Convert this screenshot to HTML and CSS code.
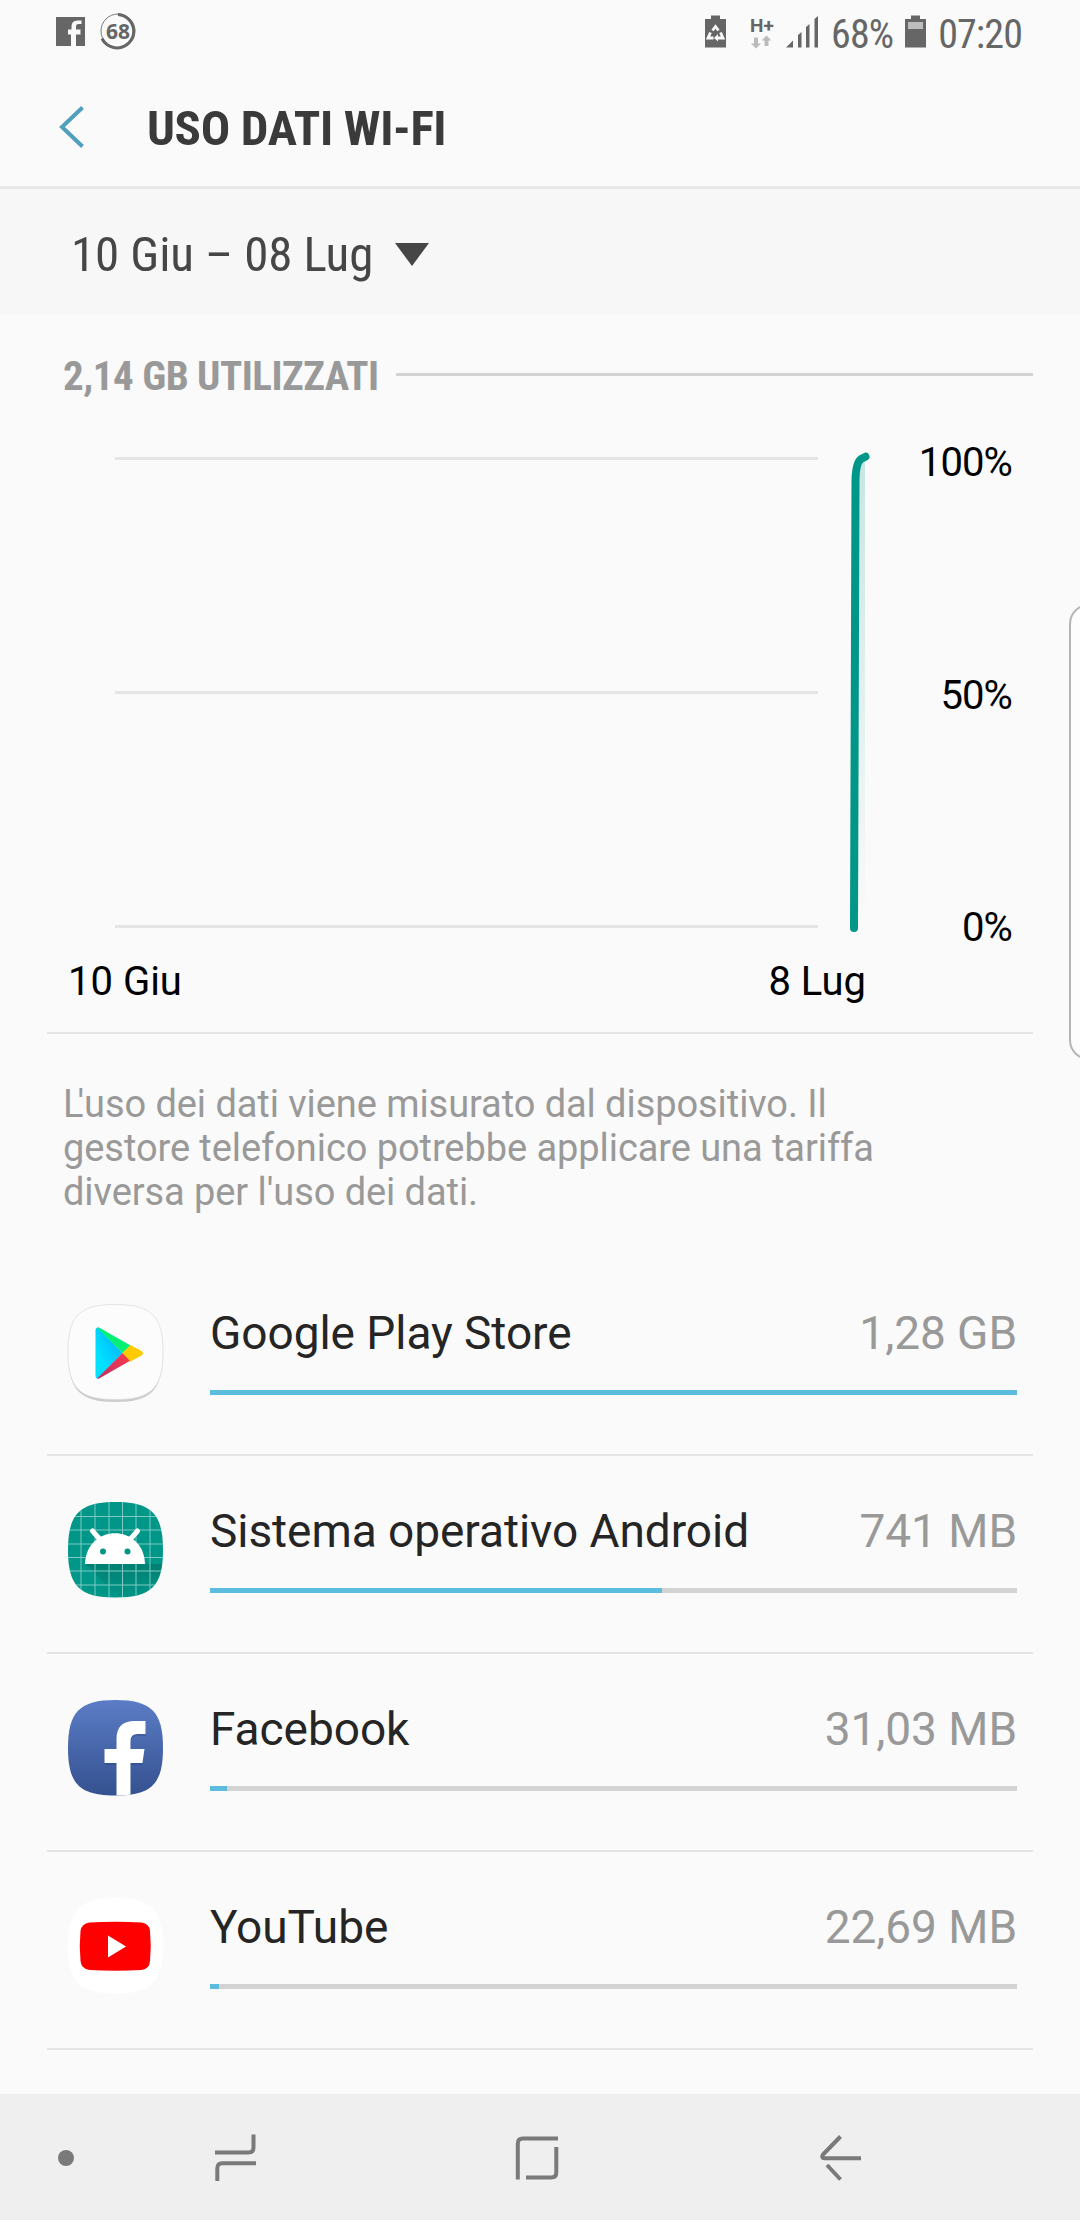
FILE: index.html
```html
<!DOCTYPE html>
<html lang="it">
<head>
<meta charset="utf-8">
<title>Uso dati Wi-Fi</title>
<link rel="stylesheet" href="styles.css">
</head>
<body>
<div class="screen">
  <div class="status">
    <svg class="status-left" width="84" height="40" viewBox="54 12 84 40">
      <path fill="#666" d="M56 17h29v29h-9V34.500h4.500V29.500H76V26.500q0-2.500 2.500-2.500h3V20.500h-4q-6 0-6 6v3h-3.500v5H71V46H56z"/>
      <circle cx="118" cy="31" r="17" fill="none" stroke="#777" stroke-width="1"/>
      <path fill="none" stroke="#666" stroke-width="3" d="M118 14.500A16.700 16.700 0 1 1 102 38.500"/>
      <text class="badge-num" x="118" y="39" text-anchor="middle">68</text>
    </svg>
    <div class="status-right">
      <svg width="118" height="40" viewBox="704 12 118 40">
        <path fill="#666" d="M706 19h6v-3.500h9V19h6v28.500h-21z"/>
        <path fill="none" stroke="#fafafa" stroke-width="2.800" d="M713.500 30.500l3-4 3 4M711.500 32.500l-2.500 5.500h5.500M721.500 32.500l2.500 5.500h-6"/>
        <path fill="#fafafa" d="M719 34v7.500l-4-3.500z"/>
        <text class="net" x="751" y="31.500">H+</text>
        <path fill="#bbb" d="M755 37.500h4v6h3l-5 5-5-5h3zM765.500 46v-5.500h-3l5-5 5 5h-3V46z"/>
        <path fill="#666" d="M787 47.500l7-7v7zM799 47.500V35l3.500-3v15.500zM807 47.500V27l3.500-3v23.500zM815.500 47.500V19l3.500-3v31.500z"/>
      </svg>
      <span class="status-text pct">68%</span>
      <svg class="battery" width="21" height="33" viewBox="0 0 21 33">
        <path fill="#666" d="M0 4h6V.5h9V4h6v28.500H0z"/><path fill="#bdbdbd" d="M3 7h15v7H3z"/>
      </svg>
      <span class="status-text clock">07:20</span>
    </div>
  </div>
  <header class="header">
    <svg width="28" height="44" viewBox="0 0 28 44"><path fill="none" stroke="#4f9fbd" stroke-width="4" d="M25.500 2.500L5 22l20.500 19.500"/></svg>
    <h1 class="title">USO DATI WI-FI</h1>
  </header>
  <div class="period">
    <span class="period-text">10 Giu – 08 Lug</span>
    <svg width="34" height="23" viewBox="0 0 34 23"><path fill="#464646" d="M0 0h34L17 23z"/></svg>
  </div>
  <div class="section"><h2 class="section-title">2,14 GB UTILIZZATI</h2><div class="section-line"></div></div>
  <div class="chart">
    <div class="plot">
      <svg width="820" height="500" viewBox="60 440 820 500">
        <defs><linearGradient id="fade" x1="0" y1="0" x2="0" y2="1"><stop offset="0" stop-color="#009688" stop-opacity=".2"/><stop offset="1" stop-color="#009688" stop-opacity="0"/></linearGradient></defs>
        <path fill="#e5e5e5" d="M115 457h703v3H115zM115 691h703v3H115zM115 925h703v3H115z"/>
        <path fill="url(#fade)" d="M854 928V462h11v466z"/>
        <path fill="none" stroke="#009688" stroke-width="8" stroke-linecap="round" stroke-linejoin="round" d="M854 928L855.500 480Q856 461 862 458.500L865.500 456.700"/>
      </svg>
      <div class="dates"><span>10 Giu</span><span>8 Lug</span></div>
    </div>
    <div class="scale"><span>100%</span><span>50%</span><span>0%</span></div>
  </div>
  <p class="note"><span class="kern">L</span>'uso dei dati viene misurato dal dispositivo. Il<br>gestore telefonico potrebbe applicare una tariffa<br>diversa per l'uso dei dati.</p>
  <ul class="apps">
    <li class="app">
      <svg class="icon" viewBox="0 0 96 98">
        <defs><linearGradient id="pb" x1="1" y1="0" x2="0" y2="1"><stop offset="0" stop-color="#00a8ff"/><stop offset=".7" stop-color="#00e0ff"/></linearGradient>
        <linearGradient id="pr" x1="1" y1="0" x2="0" y2="1"><stop offset="0" stop-color="#ff3a44"/><stop offset="1" stop-color="#b8316a"/></linearGradient></defs>
        <path fill="#bbb" d="M48 3C84 3 95 14 95 50S84 98 48 98 1 86 1 50 12 3 48 3z" opacity=".75"/>
        <path fill="#fcfcfc" stroke="#ddd" stroke-width=".8" d="M48 .5C84 .5 95.500 12 95.500 48S84 95.500 48 95.500.5 84 .5 48 12 .5 48 .5z"/>
        <path fill="url(#pb)" d="M28 26Q28 24 30 23.500L55 49 30 74.500Q28 74 28 72z"/>
        <path fill="#00f076" d="M29.500 23.500q1.500-.5 3 .5L63 41.500 55 49z"/>
        <path fill="url(#pr)" d="M29.500 74.500q1.500 .5 3-.5L63 56.500 55 49z"/>
        <path fill="#ffcb00" d="M63 41l11 6q3 2 0 4.500L63 57.500 55 49z"/>
      </svg>
      <div class="body"><div class="line"><span class="name">Google Play Store</span><span class="value">1,28 GB</span></div><div class="bar"><div class="fill" style="width:100%"></div></div></div>
    </li>
    <li class="app">
      <svg class="icon" viewBox="0 0 96 98">
        <defs><clipPath id="sq"><path d="M48 0C84 0 95.500 12 95.500 48S84 95.500 48 95.500.5 84 .5 48 12 0 48 0z"/></clipPath>
        <linearGradient id="sh" x1="0" y1="0" x2="0" y2="1"><stop offset="0" stop-color="#004d40" stop-opacity=".3"/><stop offset="1" stop-color="#004d40" stop-opacity="0"/></linearGradient></defs>
        <g clip-path="url(#sq)"><path fill="#009688" d="M0 0h96v96H0z"/>
        <path fill="url(#sh)" d="M18 62l34 34h44V62z"/>
        <path stroke="#7fcac3" stroke-width="1" fill="none" d="M13.500 0v96M27.500 0v96M41.500 0v96M55 0v96M68.500 0v96M82.500 0v96M0 14.500h96M0 28h96M0 42h96M0 55.500h96M0 69h96M0 83h96"/></g>
        <path fill="#fff" d="M17.500 62C19 21 76 21 77.500 62z"/><path stroke="#fff" stroke-width="5" stroke-linecap="round" d="M25 29l8 9M70 29l-8 9"/>
        <circle cx="35.500" cy="49.500" r="3" fill="#009688"/><circle cx="60" cy="49.500" r="3" fill="#009688"/>
      </svg>
      <div class="body"><div class="line"><span class="name">Sistema operativo Android</span><span class="value">741 MB</span></div><div class="bar"><div class="fill" style="width:56%"></div></div></div>
    </li>
    <li class="app">
      <svg class="icon" viewBox="0 0 96 98">
        <defs><linearGradient id="fb" x1="0" y1="0" x2="0" y2="1"><stop offset="0" stop-color="#5b7cc6"/><stop offset="1" stop-color="#34518f"/></linearGradient></defs>
        <g clip-path="url(#sq)"><path fill="url(#fb)" d="M0 0h96v96H0z"/>
        <path fill="#1d3570" opacity=".25" transform="translate(0 2)" d="M49 96V63H37V49h12V39q0-18 18-18h11v13h-8q-7 0-7 7v8h14l-2 14H63v33z"/>
        <path fill="#fff" d="M49 96V63H37V49h12V39q0-18 18-18h11v13h-8q-7 0-7 7v8h14l-2 14H63v33z"/></g>
      </svg>
      <div class="body"><div class="line"><span class="name">Facebook</span><span class="value">31,03 MB</span></div><div class="bar"><div class="fill" style="width:17px"></div></div></div>
    </li>
    <li class="app">
      <svg class="icon" viewBox="0 0 96 98">
        <path fill="#fff" d="M48 0C84 0 95.500 12 95.500 48S84 95.500 48 95.500.5 84 .5 48 12 0 48 0z"/>
        <path fill="red" d="M22 24.500Q48 23 74 24.500 82 25.500 82.500 33 84 48 82.500 63 82 71 74 72 48 73.500 22 72 14 71 13 63 11.500 48 13 33 14 25.500 22 24.500z"/><path fill="#fff" d="M40.500 37.500v22l18-11z"/>
      </svg>
      <div class="body"><div class="line"><span class="name">YouTube</span><span class="value">22,69 MB</span></div><div class="bar"><div class="fill" style="width:9px"></div></div></div>
    </li>
  </ul>
  <nav class="nav">
    <svg width="1080" height="126" viewBox="0 2094 1080 126" fill="none" stroke="#7a7a7a" stroke-width="4">
      <circle cx="66" cy="2158" r="8" fill="#7a7a7a" stroke="none"/>
      <path d="M253.500 2134.500v13q0 5-5 5H215M217.300 2181v-12.500q0-5.300 5-5.300H256M517.800 2179.500v-36q0-5 5-5H558M556.300 2147v25.500q0 5-5 5H526M840.500 2136.500l-17.500 18q-2 3.500 1.500 3.800h36.500M827 2165l13.500 14.500"/>
    </svg>
  </nav>
  <div class="edge-handle"></div>
</div>
</body>
</html>
```
FILE: styles.css
```css
* { box-sizing: border-box; }
body { margin: 0; background: #fafafa; font-family: Roboto, "Liberation Sans", sans-serif; }
.screen { position: relative; width: 1080px; height: 2220px; overflow: hidden; display: flex; flex-direction: column; background: #fafafa; }
.status { height: 72px; padding: 12px 58px 0 54px; display: flex; justify-content: space-between; align-items: flex-start; color: #666; }
.status svg { display: block; flex: none; }
.status-right { display: flex; align-items: flex-start; }
.badge-num { font: 700 21px "Open Sans", sans-serif; fill: #666; }
.net { font: 700 19px Roboto, sans-serif; fill: #666; }
.status-text { font-family: "Roboto Condensed", Roboto, sans-serif; font-stretch: 75%; font-size: 40px; line-height: 46px; letter-spacing: -0.9px; white-space: nowrap; }
.pct { margin-left: 10px; }
.battery { margin: 3px 12px 0 12px; }
.header { height: 117px; border-bottom: 3px solid #e8e8e8; padding: 0 0 5px 57px; display: flex; align-items: center; gap: 62px; }
.title { margin: 0; padding-top: 4px; font: 700 49px/60px "Roboto Condensed", Roboto, sans-serif; font-stretch: 75%; letter-spacing: -0.35px; color: #3a3a3a; white-space: nowrap; }
.period { height: 126px; background: #f7f7f7; padding: 0 0 0 71px; display: flex; align-items: center; gap: 22px; color: #464646; }
.period svg { margin-top: 5px; }
.period-text { padding-top: 5px; font: 400 49px/60px "Roboto Condensed", Roboto, sans-serif; font-stretch: 75%; letter-spacing: -0.1px; white-space: nowrap; }
.section { height: 119px; padding: 0 47px 0 63px; display: flex; align-items: center; gap: 17px; }
.section-title { margin: 0; padding-top: 2px; font: 700 41px/48px "Roboto Condensed", Roboto, sans-serif; font-stretch: 75%; letter-spacing: -0.5px; color: #999; white-space: nowrap; }
.section-line { flex: 1; height: 3px; background: #d3d3d3; }
.chart { height: 600px; margin: 0 47px; border-bottom: 2px solid #e5e5e5; display: flex; justify-content: space-between; padding: 6px 21px 0 13px; font-size: 40px; line-height: 48px; color: #000; }
.plot svg { display: block; }
.dates { display: flex; justify-content: space-between; padding: 18px 14px 0 8px; }
.scale { display: flex; flex-direction: column; justify-content: space-between; height: 513px; margin-top: -1px; text-align: right; letter-spacing: -0.9px; }
.note { margin: 48px 63px 0; font-size: 38px; line-height: 44px; letter-spacing: -0.07px; color: #999; white-space: nowrap; height: 176px; }
.kern { letter-spacing: -6px; }
.apps { list-style: none; margin: 0 47px; padding: 0; }
.app { height: 198px; border-bottom: 2px solid #e5e5e5; display: flex; padding: 46px 16px 0 20px; gap: 46px; }
.icon { width: 97px; height: 98px; flex: none; }
.body { flex: 1; padding-top: 1px; }
.line { display: flex; justify-content: space-between; font-size: 46px; line-height: 56px; letter-spacing: -0.05px; color: #252525; white-space: nowrap; }
.value { color: #999; }
.bar { height: 5px; margin-top: 29px; background: #d3d3d3; }
.fill { height: 5px; background: #5bbcde; }
.nav { margin-top: auto; height: 126px; background: #efefef; }
.nav svg { display: block; }
.edge-handle { position: absolute; left: 1069px; top: 604px; width: 40px; height: 456px; border: 2px solid #b5b5b5; border-radius: 20px; background: #fdfdfd; }
```
